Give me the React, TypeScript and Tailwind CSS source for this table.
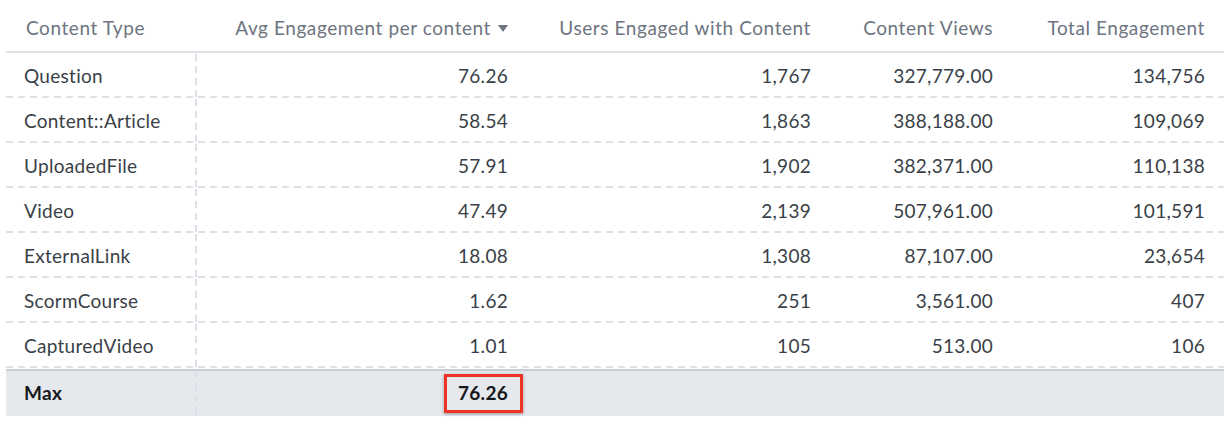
import React from 'react';

interface Row {
  type: string;
  avg: string;
  users: string;
  views: string;
  total: string;
}

const rows: Row[] = [
  { type: 'Question', avg: '76.26', users: '1,767', views: '327,779.00', total: '134,756' },
  { type: 'Content::Article', avg: '58.54', users: '1,863', views: '388,188.00', total: '109,069' },
  { type: 'UploadedFile', avg: '57.91', users: '1,902', views: '382,371.00', total: '110,138' },
  { type: 'Video', avg: '47.49', users: '2,139', views: '507,961.00', total: '101,591' },
  { type: 'ExternalLink', avg: '18.08', users: '1,308', views: '87,107.00', total: '23,654' },
  { type: 'ScormCourse', avg: '1.62', users: '251', views: '3,561.00', total: '407' },
  { type: 'CapturedVideo', avg: '1.01', users: '105', views: '513.00', total: '106' },
];

// dashed row divider + dashed first-column divider, drawn with gradients
const rowDash =
  'bg-[repeating-linear-gradient(90deg,#dde1e7_0_7px,transparent_7px_12px)] bg-[length:100%_2px] bg-bottom bg-no-repeat';
const colDash =
  'bg-[repeating-linear-gradient(180deg,#dde1e7_0_7px,transparent_7px_12px)] bg-[length:2px_100%] bg-right bg-no-repeat';

export default function App() {
  return (
    <div className="w-[1230px] h-[426px] bg-white px-[6px] font-['Lato',sans-serif] text-[19px]">
      {/* header */}
      <div className="flex h-[53px] pt-[5px] items-center border-b-2 border-[#dde1e7] text-[#6e7480] tracking-[0.03em]">
        <div className="w-[191px] pl-[20px]">Content Type</div>
        <div className="w-[329px] pr-[18px] flex items-center justify-end gap-[7px]">
          <span>Avg Engagement per content</span>
          <svg width="10" height="7" viewBox="0 0 10 7" className="mt-[1px]">
            <path d="M0 0 L10 0 L5 7 Z" fill="#6e7480" />
          </svg>
        </div>
        <div className="w-[303px] pr-[18px] text-right">Users Engaged with Content</div>
        <div className="w-[182px] pr-[18px] text-right">Content Views</div>
        <div className="w-[213px] pr-[19px] text-right">Total Engagement</div>
      </div>

      {/* body */}
      <div className="text-[#3a3f47] tracking-[0.015em]">
        {rows.map((r) => (
          <div key={r.type} className={`flex h-[45px] pt-[1px] items-center ${rowDash}`}>
            <div className={`w-[191px] h-full flex items-center pl-[18px] ${colDash}`}>{r.type}</div>
            <div className="w-[329px] pr-[18px] text-right">{r.avg}</div>
            <div className="w-[303px] pr-[18px] text-right">{r.users}</div>
            <div className="w-[182px] pr-[18px] text-right">{r.views}</div>
            <div className="w-[213px] pr-[19px] text-right">{r.total}</div>
          </div>
        ))}
      </div>

      {/* max row */}
      <div className="mt-[1px] flex h-[47px] items-center bg-[#e5e8ed] border-t-2 border-[#c9ced6] font-bold text-[#16181c] tracking-[0.015em]">
        <div className={`w-[191px] h-full flex items-center pl-[18px] ${colDash}`}>Max</div>
        <div className="w-[329px] pr-[3px] flex justify-end">
          <span className="border-[3px] border-[#ee3424] pl-[11px] pr-[12px] py-[2px] shadow-[0_1px_3px_rgba(0,0,0,0.35)]">
            76.26
          </span>
        </div>
      </div>
    </div>
  );
}
